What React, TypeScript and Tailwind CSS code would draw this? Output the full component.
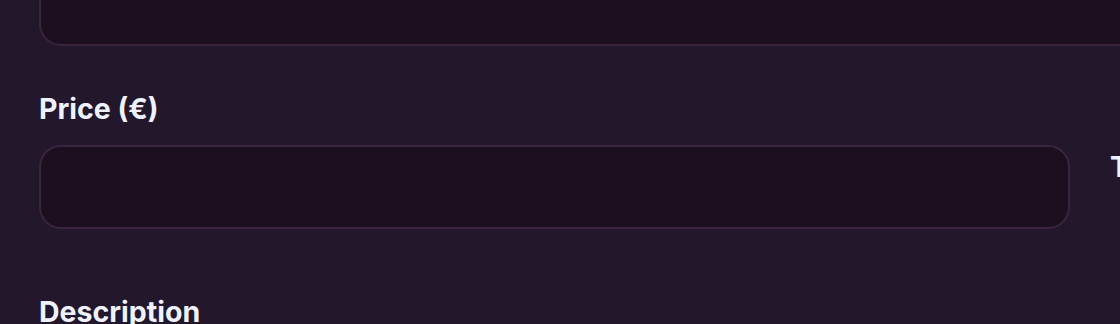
const labelCls = "block text-[28.5px] leading-[35px] font-bold text-[#eef2ff]";
const inputCls = "w-full rounded-[22px] border-2 border-[#3a2540] bg-[#1c1020]";

export default function App() {
  return (
    <div className="h-[324px] w-[1120px] overflow-hidden bg-[#23172b] font-['Inter',sans-serif]">
      <div className="w-[1300px] pl-[39px]">
        <div className={`${inputCls} -mt-[40px] h-[86px]`} />

        <div className="mt-[45px] grid grid-cols-[1031px_1fr] gap-x-[40px]">
          <div className="flex flex-col">
            <label className={labelCls}>Price (€)</label>
            <div className={`${inputCls} mt-[19px] h-[84px]`} />
          </div>
          <div className="pt-[58px]">
            <label className={labelCls}>Tax rate (%)</label>
          </div>
        </div>

        <div className="mt-[65px]">
          <label className={labelCls}>Description</label>
        </div>
      </div>
    </div>
  );
}
